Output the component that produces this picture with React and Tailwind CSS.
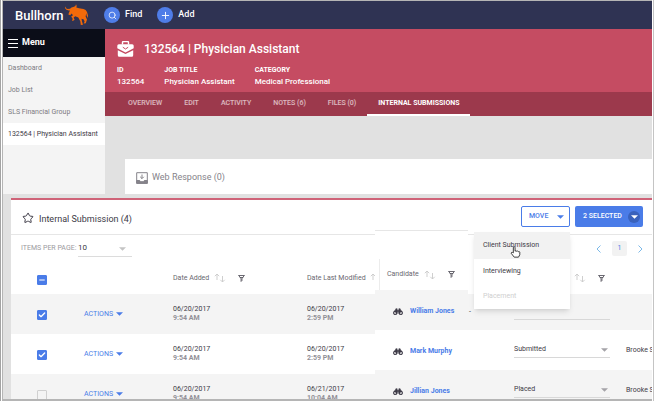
import { Check, Minus, Plus, Search, Star } from 'lucide-react'

const NAV_ITEMS = ['Dashboard', 'Job List', 'SLS Financial Group', '132564 | Physician Assistant']
const ACTIVE_NAV = '132564 | Physician Assistant'

const TABS = ['OVERVIEW', 'EDIT', 'ACTIVITY', 'NOTES (6)', 'FILES (0)', 'INTERNAL SUBMISSIONS']
const ACTIVE_TAB = 'INTERNAL SUBMISSIONS'

const JOB_FIELDS = [
  { label: 'ID', value: '132564' },
  { label: 'JOB TITLE', value: 'Physician Assistant' },
  { label: 'CATEGORY', value: 'Medical Professional' },
]

const ROWS = [
  { selected: true, added: ['06/20/2017', '9:54 AM'], modified: ['06/20/2017', '2:59 PM'], candidate: 'William Jones', status: '', owner: '' },
  { selected: true, added: ['06/20/2017', '9:54 AM'], modified: ['06/20/2017', '2:59 PM'], candidate: 'Mark Murphy', status: 'Submitted', owner: 'Brooke S' },
  { selected: false, added: ['06/20/2017', '9:54 AM'], modified: ['06/21/2017', '10:04 AM'], candidate: 'Jillian Jones', status: 'Placed', owner: 'Brooke S' },
]

function Caret({ className = '' }) {
  return (
    <svg viewBox="0 0 8 4" className={`w-[7px] h-1 shrink-0 ${className}`} aria-hidden="true">
      <path d="M0 0h8L4 4z" fill="currentColor" />
    </svg>
  )
}

function SortIcon() {
  return (
    <svg viewBox="0 0 12 10" className="w-3 h-2.5 shrink-0 text-[#c9c9c9]" fill="none" stroke="currentColor" strokeWidth="0.9" aria-hidden="true">
      <path d="M3 7V1M0.8 3.2L3 1l2.200 2.200M8.500 3v6M6.300 6.800L8.500 9l2.200-2.200" />
    </svg>
  )
}

function FilterIcon() {
  return (
    <svg viewBox="0 0 8 8" className="w-[7px] h-[7px] shrink-0 text-[#55525c]" fill="none" stroke="currentColor" aria-hidden="true">
      <path d="M.3.6h7.400M1.200 1L3.500 4.300V7.800M6.800 1L4.500 4.300V6.800M2.200 2.900h3.600" />
    </svg>
  )
}

function BinocularsIcon() {
  return (
    <svg viewBox="0 0 20 14" className="w-2.5 h-[7px] shrink-0 text-[#3d3a46]" fill="currentColor" aria-hidden="true">
      <path d="M5 1.500Q7-.5 9 1.500V11H5zM15 1.500Q13-.5 11 1.500V11h4z" />
      <path d="M8.500 4h3v4h-3zM5 2L1.200 8h5zM15 2l3.800 6h-5z" />
      <path fillRule="evenodd" d="M4.500 5.500a4.300 4.300 0 1 0 .01 0zM4.500 8a1.900 1.900 0 1 1-.01 0zM15.500 5.500a4.300 4.300 0 1 0 .01 0zM15.500 8a1.900 1.900 0 1 1-.01 0z" />
    </svg>
  )
}

function BriefcaseIcon() {
  return (
    <svg viewBox="0 0 17 16" className="w-[17px] h-4 shrink-0" aria-hidden="true">
      <path d="M5.500 3.500V1.500q0-1 1-1h4q1 0 1 1v2" fill="none" stroke="currentColor" strokeWidth="1.400" />
      <path d="M1.800 3.200h13.400q1.500 0 1.500 1.500v2.500L8.500 11.400.3 7.200V4.700q0-1.500 1.500-1.500z" fill="currentColor" />
      <path d="M.8 9.200l7.700 3.900 7.700-3.900v5q0 1.500-1.500 1.500H2.300q-1.500 0-1.500-1.500z" fill="currentColor" />
      <path d="M5.800 6.200L8.500 8l2.700-1.800" fill="none" stroke="#c54c62" strokeWidth="1" />
    </svg>
  )
}

function BullLogo() {
  return (
    <svg viewBox="0 0 24 22" className="w-6 h-[22px] text-[#f26a0a]" fill="currentColor" aria-hidden="true">
      <path d="M.8 2.500Q.3 4.600 2.600 4.900L5 4.700 6.500 3.600 9 2.800Q10.800 2.500 11 .3 12.300 2.300 11.300 3.600L14 4.300 18.500 5Q21 5.600 22 8L23 11.500 22.600 14 21.600 11.500 21.300 9.200 20.600 12.500 22 15.500 20.800 19.300 18.600 19.600 19.600 17.800 18.800 15.500 16.500 14.800 17 17.500 18 20.800 15.800 21 15.300 17.200 13.300 13.600 10.300 12.300 8.600 13.500 9.600 15.800 7.800 17 7 16.200 7.800 15 6.200 12.600 8 11.200 6.600 9.600 5.200 11.300 3.400 10.600 3.900 8.800 5 6.400Q.8 6.800.1 4.300.1 3 .8 2.500z" />
    </svg>
  )
}

function Checkbox({ checked, mixed, label }) {
  return (
    <span className="relative block w-2.5 h-2.5">
      <input
        type="checkbox"
        aria-label={label}
        defaultChecked={checked || mixed}
        className="peer block w-2.5 h-2.5 appearance-none rounded-[1px] border border-[#d0d0d0] checked:border-[#4a7ce8] checked:bg-[#4a7ce8]"
      />
      <span className="absolute inset-0 hidden peer-checked:flex items-center justify-center text-white pointer-events-none">
        {mixed ? <Minus size={8} strokeWidth={3} /> : <Check size={8} strokeWidth={4} />}
      </span>
    </span>
  )
}

function DateCell({ value }) {
  return (
    <td className="p-0 align-top pt-[11px] leading-[9px]">
      <div className="text-[#3d3a46]">{value[0]}</div>
      <div className="font-bold text-[#929097]">{value[1]}</div>
    </td>
  )
}

function TopBar() {
  return (
    <header className="flex items-center h-7 pl-3 bg-[#2f3353] text-white">
      <a href="#home" className="flex items-center">
        <span className="w-[50px] pt-0.5 text-[13px] font-medium leading-4">Bullhorn</span>
        <BullLogo />
      </a>
      <button type="button" className="flex items-center gap-[5px] ml-[15px] text-[9px] font-medium">
        <span className="flex items-center justify-center w-4 h-4 rounded-full bg-[#4f7de8]"><Search size={9} /></span>
        Find
      </button>
      <button type="button" className="flex items-center gap-[5px] ml-[15px] text-[9px] font-medium">
        <span className="flex items-center justify-center w-4 h-4 rounded-full bg-[#4f7de8]"><Plus size={11} /></span>
        Add
      </button>
    </header>
  )
}

function Sidebar() {
  return (
    <nav className="w-[102px] shrink-0 bg-[#f4f4f4]">
      <button type="button" className="flex items-center gap-1 w-full h-7 px-[5px] bg-[#0b0d18] text-white text-[9px] font-bold">
        <svg viewBox="0 0 10 9" className="w-2.5 h-[9px]" stroke="currentColor" aria-hidden="true">
          <path d="M0 .5h10M0 4.500h10M0 8.500h10" />
        </svg>
        Menu
      </button>
      {NAV_ITEMS.map(item => (
        <a
          key={item}
          href="#nav"
          className={`flex items-center h-[22px] px-[5px] text-[7px] whitespace-nowrap ${item === ACTIVE_NAV ? 'bg-white text-[#3d3a46]' : 'text-[#7d7b82]'}`}
        >
          {item}
        </a>
      ))}
    </nav>
  )
}

function JobHeader() {
  return (
    <div className="text-white">
      <div className="h-[63px] pl-3 pt-2 bg-[#c54c62]">
        <div className="flex items-center gap-2.5 h-6">
          <BriefcaseIcon />
          <h1 className="text-xs font-medium">132564 | Physician Assistant</h1>
        </div>
        <dl className="flex gap-5 pt-[3px]">
          {JOB_FIELDS.map(field => (
            <div key={field.label}>
              <dt className="text-[7px] font-bold leading-3">{field.label}</dt>
              <dd className="text-[8px] font-medium leading-3">{field.value}</dd>
            </div>
          ))}
        </dl>
      </div>
      <div className="flex h-6 pl-3 bg-[#9c394c] text-[7px] font-medium">
        {TABS.map(tab => (
          <button
            key={tab}
            type="button"
            className={`px-[11px] pt-px border-b-2 ${tab === ACTIVE_TAB ? 'border-white font-bold text-white' : 'border-transparent text-white/65'}`}
          >
            {tab}
          </button>
        ))}
      </div>
    </div>
  )
}

function MoveMenu() {
  return (
    <div className="relative">
      <button type="button" className="flex items-center justify-between w-[49px] h-[21px] px-[7px] pr-[5px] rounded-[2px] border border-[#4a7ce8] text-[#4a7ce8]">
        MOVE
        <Caret />
      </button>
      <div className="absolute right-0 top-[26px] z-10 w-24 bg-white shadow-md text-[7px] font-normal text-[#3d3a46]">
        <button type="button" className="flex items-center w-full h-[27px] px-[9px] bg-[#f2f2f2]">Client Submission</button>
        <button type="button" className="flex items-center w-full h-[25px] px-[9px]">Interviewing</button>
        <button type="button" disabled className="flex items-center w-full h-[25px] px-[9px] text-[#cfcfcf]">Placement</button>
        <svg viewBox="0 0 12 14" className="absolute left-9 top-3.5 w-[11px] h-3 pointer-events-none" fill="white" stroke="#222" aria-hidden="true">
          <path d="M3.500 8V1.500q1-1.500 2 0V6q1-1 2 .2 1-.8 1.800.4 1.400-.6 1.700.6v3L9.500 13h-5L1 8.500q0-1.500 1.500-1z" />
        </svg>
      </div>
    </div>
  )
}

function DatesTable() {
  return (
    <div className="w-[364px] shrink-0 mt-1 border-t border-[#e6e6e6]">
      <div className="flex items-center h-[27px] pl-2.5 text-[7px] text-[#9c9aa0]">
        <label htmlFor="per-page" className="w-[57px]">ITEMS PER PAGE:</label>
        <div className="relative w-[54px] border-b border-[#dcdcdc]">
          <select id="per-page" className="block w-full h-[15px] appearance-none text-[8px] text-[#3d3a46]">
            <option>10</option>
          </select>
          <Caret className="absolute right-1.5 top-1.5 text-[#c4c4c4] pointer-events-none" />
        </div>
      </div>
      <table className="w-full table-fixed text-[7px] text-left">
        <colgroup>
          <col className="w-[73px]" />
          <col className="w-[89px]" />
          <col className="w-[134px]" />
          <col />
        </colgroup>
        <thead>
          <tr className="h-8">
            <th className="p-0 pl-[26px] pt-1"><Checkbox mixed label="Select all" /></th>
            <th className="p-0" aria-label="Actions" />
            <th className="p-0 font-normal text-[#6a6870]">
              <div className="flex items-center"><span className="w-[41px]">Date Added</span><SortIcon /><span className="pl-3"><FilterIcon /></span></div>
            </th>
            <th className="p-0 font-normal text-[#6a6870]">
              <div className="flex items-center gap-1 overflow-hidden"><span className="whitespace-nowrap">Date Last Modified</span><SortIcon /></div>
            </th>
          </tr>
        </thead>
        <tbody>
          {ROWS.map(row => (
            <tr key={row.candidate} className="h-10 odd:bg-[#f4f4f4]">
              <td className="p-0 pl-[26px] pt-px"><Checkbox checked={row.selected} label={`Select ${row.candidate}`} /></td>
              <td className="p-0">
                <button type="button" className="flex items-center gap-[3px] text-[#4a7ce8]">ACTIONS <Caret /></button>
              </td>
              <DateCell value={row.added} />
              <DateCell value={row.modified} />
            </tr>
          ))}
        </tbody>
      </table>
    </div>
  )
}

function CandidateTable() {
  return (
    <div className="w-[93px] shrink-0 border-t border-[#e6e6e6] pt-7 bg-white">
      <table className="w-full text-[7px] text-left">
        <thead>
          <tr className="h-[31px]">
            <th className="p-0 pl-1 font-normal text-[#6a6870]">
              <div className="flex items-center h-[31px] pl-[7px] border-l border-[#ececec]">
                <span className="w-[37px]">Candidate</span><SortIcon /><span className="pl-3"><FilterIcon /></span>
              </div>
            </th>
          </tr>
        </thead>
        <tbody>
          {ROWS.map(row => (
            <tr key={row.candidate} className="h-10 odd:bg-[#f4f4f4]">
              <td className="p-0 pl-[18px] pt-[3px]">
                <div className="flex items-center gap-[7px]">
                  <BinocularsIcon />
                  <a href="#candidate" className="font-bold whitespace-nowrap text-[#4a7ce8]">{row.candidate}</a>
                </div>
              </td>
            </tr>
          ))}
        </tbody>
      </table>
    </div>
  )
}

function StatusTable() {
  return (
    <div className="flex-1 min-w-0 mt-1 border-t border-[#e6e6e6] overflow-hidden">
      <div className="flex items-center justify-end h-[27px] pr-[9px] gap-[11px] text-[7px] text-[#4a7ce8]">
        <button type="button" aria-label="Previous page" className="text-[#7cb9e8]">
          <svg viewBox="0 0 5 8" className="w-[5px] h-2" fill="none" stroke="currentColor"><path d="M4.500.5L1 4l3.500 3.500" /></svg>
        </button>
        <button type="button" className="w-[15px] h-[15px] rounded-[2px] bg-[#f2f2f2]">1</button>
        <button type="button" aria-label="Next page" className="text-[#7cb9e8]">
          <svg viewBox="0 0 5 8" className="w-[5px] h-2" fill="none" stroke="currentColor"><path d="M.5.5L4 4 .5 7.500" /></svg>
        </button>
      </div>
      <table className="w-full table-fixed text-[7px] text-left text-[#3d3a46]">
        <colgroup>
          <col className="w-[46px]" />
          <col className="w-28" />
          <col />
        </colgroup>
        <thead>
          <tr className="h-8">
            <th className="p-0" aria-label="Comments" />
            <th className="p-0 font-normal">
              <div className="flex items-center pl-[60px] gap-3"><SortIcon /><FilterIcon /></div>
            </th>
            <th className="p-0" aria-label="Owner" />
          </tr>
        </thead>
        <tbody>
          {ROWS.map((row, i) => (
            <tr key={row.candidate} className={`odd:bg-[#f4f4f4] ${i === 0 ? 'h-9' : 'h-10'}`}>
              <td className="p-0 pl-px">{row.status ? '' : '-'}</td>
              <td className="p-0 pr-4">
                <div className="relative border-b border-[#d8d8d8]">
                  <select aria-label={`Status of ${row.candidate}`} className="block w-full h-[15px] appearance-none">
                    <option>{row.status}</option>
                  </select>
                  {row.status && <Caret className="absolute right-0.5 top-1.5 text-[#a5a3a8] pointer-events-none" />}
                </div>
              </td>
              <td className="p-0 whitespace-nowrap">{row.owner}</td>
            </tr>
          ))}
        </tbody>
      </table>
    </div>
  )
}

function SubmissionsPanel() {
  return (
    <section className="ml-2 border-t-2 border-[#cf6378] bg-white">
      <div className="flex items-start h-[30px] pl-[11px] pr-[9px] pt-1.5 text-[#3d3a46]">
        <Star size={12} className="mt-1.5" />
        <h2 className="flex-1 pt-[5px] pl-[5px] text-[9px] leading-4">Internal Submission (4)</h2>
        <div className="flex gap-[5px] text-[7px] font-medium">
          <MoveMenu />
          <button type="button" className="flex items-center justify-between w-[68px] h-[21px] pl-2 pr-[3px] rounded-[2px] bg-[#4a7ce8] text-white">
            2 SELECTED
            <span className="flex items-center justify-center w-3 h-3 rounded-full bg-[#3a62bc]"><Caret /></span>
          </button>
        </div>
      </div>
      <div className="flex">
        <DatesTable />
        <CandidateTable />
        <StatusTable />
      </div>
    </section>
  )
}

export default function App() {
  return (
    <div className="h-screen border-x border-l-[#a3a3a3] border-r-[#c4c4c4] bg-white px-px font-[Roboto,sans-serif]">
      <div className="h-full overflow-hidden border-l border-t border-b-2 border-[#b5b5b5] bg-[#e1e1e1]">
        <TopBar />
        <div className="flex">
          <Sidebar />
          <main className="flex-1 min-w-0">
            <JobHeader />
            <section className="flex items-center gap-1 h-[35px] mt-[43px] ml-5 pl-[11px] pt-[3px] bg-white text-[9px] text-[#85838a]">
              <svg viewBox="0 0 12 12" className="w-3 h-3 shrink-0" fill="none" stroke="currentColor" aria-hidden="true">
                <path d="M.7.7h10.600v10.600H.7zM6 2.500v4M4.200 4.800L6 6.600l1.800-1.800" />
                <path d="M.7 8.500h3l1 1.200h2.600l1-1.200h3v2.800H.7z" fill="currentColor" />
              </svg>
              <h2>Web Response (0)</h2>
            </section>
          </main>
        </div>
        <div className="pt-1">
          <SubmissionsPanel />
        </div>
      </div>
    </div>
  )
}
